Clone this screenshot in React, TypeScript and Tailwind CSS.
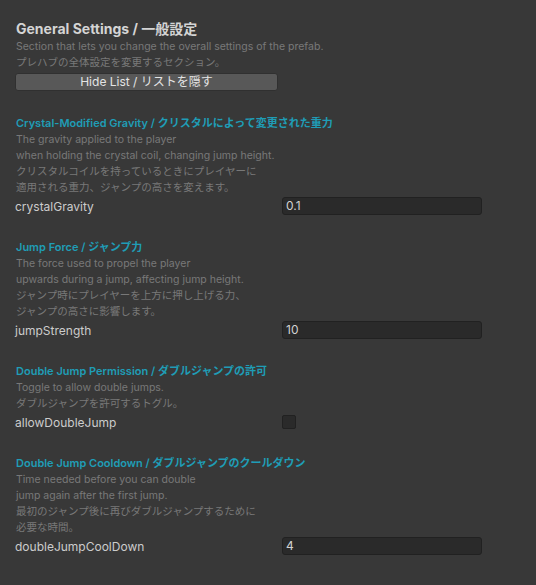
import React from "react";

const font = { fontFamily: 'Inter, "Noto Sans CJK JP", sans-serif' };

type Sec = {
  title: string;
  desc: string[];
  label: string;
  value?: string;
  checkbox?: boolean;
};

const sections: Sec[] = [
  {
    title: "Crystal-Modified Gravity / クリスタルによって変更された重力",
    desc: [
      "The gravity applied to the player",
      "when holding the crystal coil, changing jump height.",
      "クリスタルコイルを持っているときにプレイヤーに",
      "適用される重力、ジャンプの高さを変えます。",
    ],
    label: "crystalGravity",
    value: "0.1",
  },
  {
    title: "Jump Force / ジャンプ力",
    desc: [
      "The force used to propel the player",
      "upwards during a jump, affecting jump height.",
      "ジャンプ時にプレイヤーを上方に押し上げる力、",
      "ジャンプの高さに影響します。",
    ],
    label: "jumpStrength",
    value: "10",
  },
  {
    title: "Double Jump Permission / ダブルジャンプの許可",
    desc: ["Toggle to allow double jumps.", "ダブルジャンプを許可するトグル。"],
    label: "allowDoubleJump",
    checkbox: true,
  },
  {
    title: "Double Jump Cooldown / ダブルジャンプのクールダウン",
    desc: [
      "Time needed before you can double",
      "jump again after the first jump.",
      "最初のジャンプ後に再びダブルジャンプするために",
      "必要な時間。",
    ],
    label: "doubleJumpCoolDown",
    value: "4",
  },
];

function Section({ s }: { s: Sec }) {
  return (
    <div className="mt-[24px] flex flex-col">
      <div className="h-[16px] leading-[16px] text-[11px] font-semibold text-[#1f9db6] pl-[1px] whitespace-nowrap">
        {s.title}
      </div>
      <div className="mt-[1px] flex flex-col">
        {s.desc.map((d, i) => (
          <div
            key={i}
            className="h-[16px] leading-[16px] text-[10.5px] text-[#787878] pl-[1px] whitespace-nowrap"
          >
            {d}
          </div>
        ))}
      </div>
      <div className="mt-[1px] h-[18px] flex items-center">
        <div className="w-[267px] h-[18px] pt-[1px] text-[12px] text-[#cccccc] leading-[18px]">{s.label}</div>
        {s.checkbox ? (
          <div className="w-[14px] h-[14px] rounded-[2px] bg-[#2a2a2a] border border-[#212121]" />
        ) : (
          <div className="w-[200px] h-[18px] rounded-[3px] bg-[#2a2a2a] border border-[#212121] flex items-center pl-[3px] text-[12px] text-[#d2d2d2] leading-[16px]">
            {s.value}
          </div>
        )}
      </div>
    </div>
  );
}

export default function App() {
  return (
    <div className="w-[536px] h-[585px] bg-[#383838] overflow-hidden" style={font}>
      <div className="pl-[15px] pt-[20px] flex flex-col">
        <div className="h-[17px] leading-[17px] text-[14px] font-bold text-[#d4d4d4] pl-[1px] whitespace-nowrap">
          General Settings / 一般設定
        </div>
        <div className="mt-[2px] flex flex-col">
          <div className="h-[16px] leading-[16px] text-[10.5px] text-[#787878] pl-[1px] whitespace-nowrap">
            Section that lets you change the overall settings of the prefab.
          </div>
          <div className="h-[16px] leading-[16px] text-[10.5px] text-[#787878] pl-[1px] whitespace-nowrap">
            プレハブの全体設定を変更するセクション。
          </div>
        </div>
        <div className="mt-[2px] w-[263px] h-[18px] rounded-[3px] bg-[#585858] border border-[#303030] flex items-center justify-center text-[12px] text-[#e4e4e4] leading-[16px]">
          Hide List / リストを隠す
        </div>
        {sections.map((s, i) => (
          <Section key={i} s={s} />
        ))}
      </div>
    </div>
  );
}
